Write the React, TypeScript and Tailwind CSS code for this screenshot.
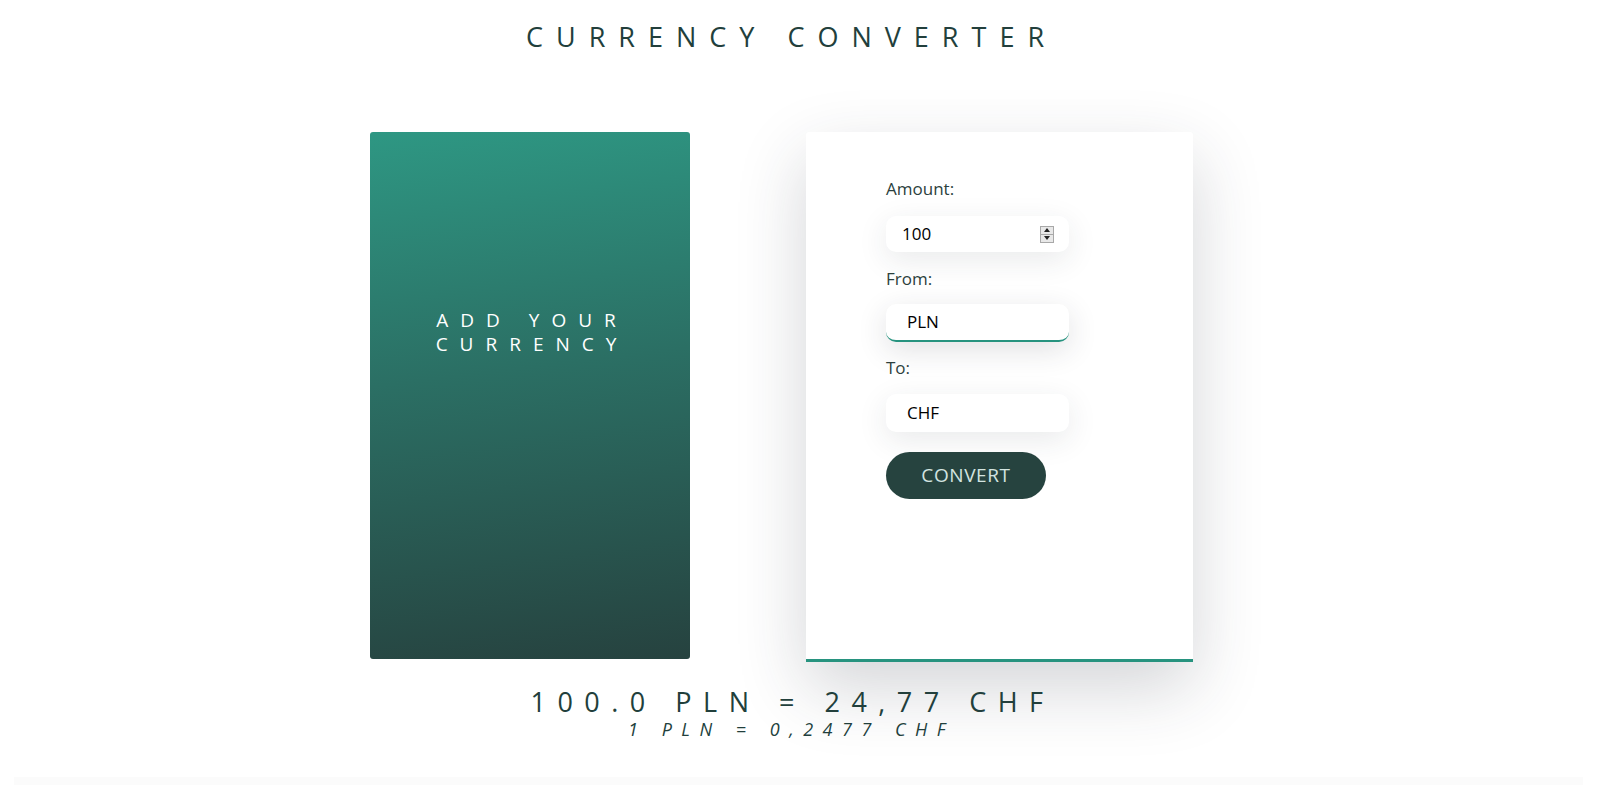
export default function App() {
  const font = { fontFamily: '"Open Sans", "DejaVu Sans", sans-serif' };

  return (
    <div className="min-h-[1090px] bg-white pr-[17px] text-[#223f3c]" style={font}>
      {/* Header */}
      <h1 className="pt-[20px] text-center text-[27px] font-medium leading-[34px] tracking-[13px] text-[#223f3c]">
        CURRENCY CONVERTER
      </h1>

      {/* Panels */}
      <div className="mx-auto mt-[78px] flex w-[843px] items-start gap-[116px]">
        <div className="flex h-[527px] w-[320px] flex-col items-center rounded-[3px] bg-[linear-gradient(173deg,#2e9783_0%,#2b6f64_45%,#26423f_100%)] pt-[176px]">
          <p className="pl-[4px] text-center text-[19px] leading-[24px] tracking-[12px] text-white">
            ADD YOUR
            <br />
            CURRENCY
          </p>
        </div>

        <div className="h-[530px] w-[387px] rounded-t-[3px] border-b-[3px] border-[#27937f] bg-white pl-[80px] pt-[46px] shadow-[0_26px_70px_rgba(40,45,60,0.2)]">
          <label className="block text-[17px] leading-[22px] text-[#2c3f3d]">Amount:</label>
          <div className="mt-[16px] flex h-[36px] w-[183px] items-center justify-between rounded-[10px] bg-white pl-[16px] pr-[15px] shadow-[0_8px_30px_rgba(40,45,60,0.10)]">
            <span className="text-[17px] text-black">100</span>
            <div className="flex h-[17px] w-[14px] flex-col border border-[#a8a8a8] bg-[#e8e8e8]">
              <div className="flex flex-1 items-center justify-center border-b border-[#a8a8a8]">
                <svg width="6" height="4" viewBox="0 0 6 4"><path d="M3 0 L6 4 L0 4 Z" fill="#222" /></svg>
              </div>
              <div className="flex flex-1 items-center justify-center">
                <svg width="6" height="4" viewBox="0 0 6 4"><path d="M0 0 L6 0 L3 4 Z" fill="#222" /></svg>
              </div>
            </div>
          </div>

          <label className="mt-[16px] block text-[17px] leading-[22px] text-[#2c3f3d]">From:</label>
          <div className="mt-[14px] flex h-[38px] w-[183px] items-center rounded-[10px] border-b-[2px] border-[#27937f] bg-white pl-[21px] shadow-[0_8px_30px_rgba(40,45,60,0.14)]">
            <span className="text-[17px] text-black">PLN</span>
          </div>

          <label className="mt-[15px] block text-[17px] leading-[22px] text-[#2c3f3d]">To:</label>
          <div className="mt-[15px] flex h-[38px] w-[183px] items-center rounded-[10px] bg-white pl-[21px] shadow-[0_8px_30px_rgba(40,45,60,0.10)]">
            <span className="text-[17px] text-black">CHF</span>
          </div>

          <button className="mt-[20px] h-[47px] w-[160px] rounded-full bg-[#26433f] text-[19px] tracking-[0.6px] text-[#d3e4e0]">
            CONVERT
          </button>
        </div>
      </div>

      {/* Result */}
      <div className="mt-[25px] text-center">
        <p className="pl-[2px] text-[27px] font-medium leading-[30px] tracking-[11.5px] text-[#223f3c]">100.0 PLN = 24,77 CHF</p>
        <p className="mt-[1px] text-[18px] italic leading-[22px] tracking-[9.5px] text-[#223f3c]">1 PLN = 0,2477 CHF</p>
      </div>

      <div className="ml-[14px] mt-[37px] h-[300px] bg-[#fbfbfb]" />
    </div>
  );
}
